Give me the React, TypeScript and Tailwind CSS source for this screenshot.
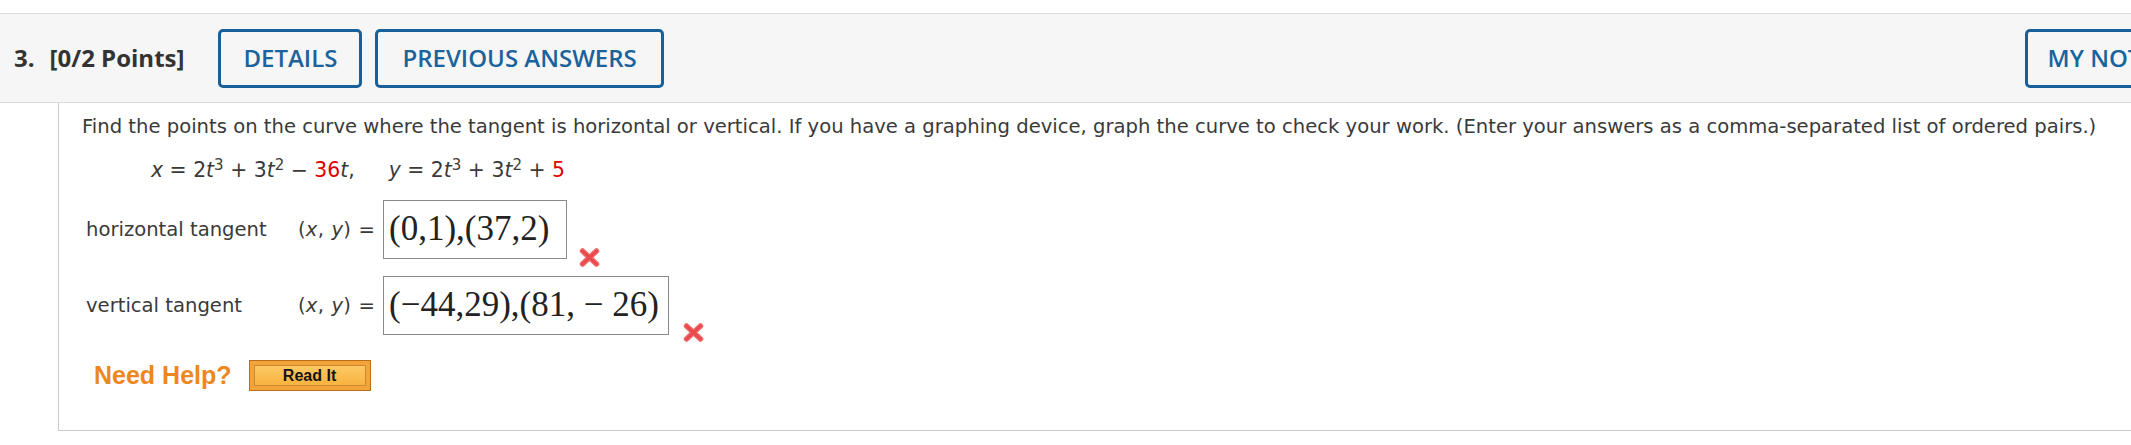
import React from 'react';

const WrongMark = () => (
  <svg width="21" height="19" viewBox="0 0 21 19" className="block shrink-0">
    <path d="M3.5 3 L17.5 16" stroke="#f26a6a" strokeWidth="5.5" strokeLinecap="round" />
    <path d="M17.5 3 L3.5 16" stroke="#f26a6a" strokeWidth="5.5" strokeLinecap="round" />
    <path d="M3.5 3 L17.5 16" stroke="#e84a4d" strokeWidth="3" strokeLinecap="round" />
    <path d="M17.5 3 L3.5 16" stroke="#e84a4d" strokeWidth="3" strokeLinecap="round" />
  </svg>
);

const HeaderButton = ({ label, className = '' }: { label: string; className?: string }) => (
  <button
    className={`h-[59px] shrink-0 rounded-[5px] border-[3px] border-[#17609a] font-['Open_Sans'] text-[24px] font-semibold leading-none text-[#1a639c] ${className}`}
  >
    {label}
  </button>
);

const Pair = () => (
  <span className="w-[85px] shrink-0 whitespace-nowrap text-[19.6px] tracking-[0.2px] text-[#3a3a3a] [word-spacing:1px]">
    (<i>x</i>, <i>y</i>) =
  </span>
);

const App = () => {
  return (
    <div className="h-[445px] w-[2131px] overflow-hidden bg-white font-['DejaVu_Sans',sans-serif] text-[#333]">
      <div className="h-[13px]" />

      {/* Question header */}
      <div className="flex h-[90px] items-center border-y border-[#dcdcdc] bg-[#f6f6f6] pl-[14px]">
        <span className="font-['Open_Sans'] text-[24px] font-bold text-[#333]">3.</span>
        <span className="ml-[15px] font-['Open_Sans'] text-[24px] font-bold text-[#333]">[0/2 Points]</span>
        <HeaderButton label="DETAILS" className="ml-[34px] px-[22px]" />
        <HeaderButton label="PREVIOUS ANSWERS" className="ml-[13px] px-[24px]" />
        <HeaderButton label="MY NOTES" className="-mr-[60px] ml-auto px-[20px]" />
      </div>

      {/* Question body */}
      <div className="ml-[58px] h-[328px] border-b border-l border-[#cccccc] pl-[23px] pt-[10px]">
        <p className="whitespace-nowrap text-[19.6px] leading-[28px] text-[#3a3a3a]">
          Find the points on the curve where the tangent is horizontal or vertical. If you have a graphing device,
          graph the curve to check your work. (Enter your answers as a comma-separated list of ordered pairs.)
        </p>

        <p className="mt-[15px] whitespace-nowrap pl-[69px] text-[20.4px] leading-[28px] text-[#3a3a3a]">
          <i>x</i> = 2<i>t</i>
          <sup className="text-[15px]">3</sup> + 3<i>t</i>
          <sup className="text-[15px]">2</sup> − <span className="text-[#e00000]">36</span>
          <i>t</i>,<span className="inline-block w-[34px]" />
          <i>y</i> = 2<i>t</i>
          <sup className="text-[15px]">3</sup> + 3<i>t</i>
          <sup className="text-[15px]">2</sup> + <span className="text-[#e00000]">5</span>
        </p>

        {/* horizontal */}
        <div className="mt-[16px] flex h-[59px] items-start">
          <div className="flex h-[59px] shrink-0 items-center pl-[4px]">
            <span className="w-[212px] shrink-0 whitespace-nowrap text-[19.6px] text-[#3a3a3a]">horizontal tangent</span>
            <Pair />
          </div>
          <div className="flex h-[59px] w-[184px] shrink-0 items-center whitespace-nowrap border-[1.5px] border-[#8a8a8a] pl-[5px] font-['Liberation_Serif',serif] text-[35px] text-[#222]">
            (0,1),(37,2)
          </div>
          <div className="ml-[12px] mt-[48px]">
            <WrongMark />
          </div>
        </div>

        {/* vertical */}
        <div className="mt-[17px] flex h-[59px] items-start">
          <div className="flex h-[59px] shrink-0 items-center pl-[4px]">
            <span className="w-[212px] shrink-0 whitespace-nowrap text-[19.6px] text-[#3a3a3a]">vertical tangent</span>
            <Pair />
          </div>
          <div className="flex h-[59px] w-[286px] shrink-0 items-center whitespace-nowrap border-[1.5px] border-[#8a8a8a] pl-[5px] font-['Liberation_Serif',serif] text-[35px] text-[#222]">
            (−44,29),(81, − 26)
          </div>
          <div className="ml-[14px] mt-[47px]">
            <WrongMark />
          </div>
        </div>

        {/* help */}
        <div className="mt-[22px] flex items-center pl-[12px]">
          <span className="font-['Liberation_Sans',sans-serif] text-[25px] font-bold text-[#ec8722]">Need Help?</span>
          <div className="ml-[17px] h-[31px] w-[122px] border border-[#b96e1c] bg-[#f2a43a] p-[4px]">
            <div className="flex h-full w-full items-center justify-center border border-[#cf8a30] bg-gradient-to-b from-[#fdc863] to-[#f8b33f] font-['Liberation_Sans',sans-serif] text-[16px] font-bold leading-none text-[#141414]">
              Read It
            </div>
          </div>
        </div>
      </div>
    </div>
  );
};

export default App;
